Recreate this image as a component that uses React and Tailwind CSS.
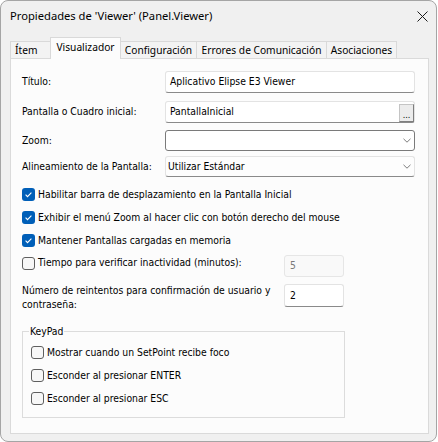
const F = "font-['DejaVu_Sans_Condensed','Liberation_Sans',sans-serif] text-[10.3px] text-black";

function Check({ checked }) {
  return checked ? (
    <span className="w-[13px] h-[13px] rounded-[3px] bg-[#005fb8] flex items-center justify-center shrink-0">
      <svg width="9" height="9" viewBox="0 0 9 9">
        <path d="M1.6 4.7L3.5 6.6L7.4 2.6" fill="none" stroke="white" strokeWidth="1.1" />
      </svg>
    </span>
  ) : (
    <span className="w-[13px] h-[13px] rounded-[3px] border border-[#5f5f5f] bg-[#f7f7f7] shrink-0" />
  );
}

function Chevron() {
  return (
    <svg width="8" height="5" viewBox="0 0 8 5" className="shrink-0">
      <path d="M0.5 0.8L4 4.2L7.5 0.8" fill="none" stroke="#6e6e6e" strokeWidth="0.9" />
    </svg>
  );
}

function CheckRow({ checked, children }) {
  return (
    <div className="h-[23px] flex items-center">
      <Check checked={checked} />
      <span className="ml-[3px] whitespace-nowrap">{children}</span>
    </div>
  );
}

export default function App() {
  return (
    <div className="w-[438px] h-[442px] bg-white">
      <div className="w-[437px] h-[442px] rounded-[8px] border border-[#a5a5a5] bg-[#f0f0f0] flex flex-col overflow-hidden">
        {/* title bar */}
        <div className="h-[30px] shrink-0 flex items-center justify-between pl-[9px] pr-[8px]">
          <span className="font-['Noto_Sans',sans-serif] text-[11.2px] text-black whitespace-nowrap">
            Propiedades de 'Viewer' (Panel.Viewer)
          </span>
          <svg width="11" height="11" viewBox="0 0 11 11">
            <path d="M0.5 0.5L10.5 10.5M10.5 0.5L0.5 10.5" stroke="#1b1b1b" strokeWidth="1" />
          </svg>
        </div>

        {/* tabs */}
        <div className="h-[28px] shrink-0 flex items-end pl-[9px] font-['Noto_Sans',sans-serif] text-[10.2px] text-black">
          <div className="w-[40px] h-[18px] border-t border-l border-[#d9d9d9] bg-[#f3f3f3] flex items-center pl-[4px]">
            Ítem
          </div>
          <div className="relative z-10 w-[71px] h-[22px] border-t border-l border-r border-[#d9d9d9] bg-[#fcfcfc] flex items-center justify-center pb-[1px]">
            Visualizador
          </div>
          <div className="w-[76px] h-[18px] border-t border-r border-[#d9d9d9] bg-[#f3f3f3] flex items-center justify-center">
            Configuración
          </div>
          <div className="w-[130px] h-[18px] border-t border-r border-[#d9d9d9] bg-[#f3f3f3] flex items-center justify-center">
            Errores de Comunicación
          </div>
          <div className="w-[70px] h-[18px] border-t border-r border-[#d9d9d9] bg-[#f3f3f3] flex items-center justify-center">
            Asociaciones
          </div>
        </div>

        {/* panel */}
        <div className={"-mt-px ml-[9px] w-[419px] h-[376px] shrink-0 border border-[#dadada] bg-[#fcfcfc] pl-[11px] pt-[12px] flex flex-col " + F}>
          <div className="h-[22px] flex items-center">
            <span className="w-[143px]">Título:</span>
            <div className="w-[250px] h-[22px] bg-white border border-[#e3e3e3] border-b-[#8a8a8a] rounded-[3px] flex items-center pl-[4px]">
              Aplicativo Elipse E3 Viewer
            </div>
          </div>

          <div className="mt-[8px] h-[22px] flex items-center">
            <span className="w-[143px]">Pantalla o Cuadro inicial:</span>
            <div className="w-[250px] h-[22px] bg-white border border-[#e3e3e3] border-b-[#8a8a8a] rounded-[3px] flex pl-[4px]">
              <span className="flex-1 self-center">PantallaInicial</span>
              <div className="self-end w-[15px] h-[18px] bg-[#ececec] border border-[#c4c4c4] border-r-[#7e7e7e] border-b-[#7e7e7e] flex items-end justify-center leading-[12px] text-[9px]">
                ...
              </div>
            </div>
          </div>

          <div className="mt-[7px] h-[21px] flex items-center">
            <span className="w-[143px]">Zoom:</span>
            <div className="w-[250px] h-[21px] bg-white border border-[#7a7a7a] rounded-[3px] flex items-center justify-end pr-[3px]">
              <Chevron />
            </div>
          </div>

          <div className="mt-[5px] h-[21px] flex items-center">
            <span className="w-[143px]">Alineamiento de la Pantalla:</span>
            <div className="w-[250px] h-[21px] bg-[#fdfdfd] border border-[#e3e3e3] border-b-[#8a8a8a] rounded-[3px] flex items-center pl-[2px] pr-[3px]">
              <span className="flex-1">Utilizar Estándar</span>
              <Chevron />
            </div>
          </div>

          <div className="mt-[6px] flex flex-col">
            <CheckRow checked>Habilitar barra de desplazamiento en la Pantalla Inicial</CheckRow>
            <CheckRow checked>Exhibir el menú Zoom al hacer clic con botón derecho del mouse</CheckRow>
            <CheckRow checked>Mantener Pantallas cargadas en memoria</CheckRow>
          </div>

          <div className="mt-[3px] h-[22px] flex items-start">
            <div className="w-[262px] h-[16px] flex items-center">
              <Check checked={false} />
              <span className="ml-[3px] whitespace-nowrap">Tiempo para verificar inactividad (minutos):</span>
            </div>
            <div className="w-[60px] h-[22px] bg-[#f9f9f9] border border-[#e6e6e6] rounded-[3px] flex items-center pl-[5px] text-[#7a7a7a]">
              5
            </div>
          </div>

          <div className="mt-[7px] h-[23px] flex items-start">
            <div className="w-[262px] -mt-px leading-[14px] whitespace-nowrap">
              Número de reintentos para confirmación de usuario y
              <br />
              contraseña:
            </div>
            <div className="w-[60px] h-[23px] bg-white border border-[#e3e3e3] border-b-[#8a8a8a] rounded-[3px] flex items-center pl-[5px]">
              2
            </div>
          </div>

          <fieldset className="mt-[18px] w-[323px] h-[93px] border border-[#dcdcdc] pl-[8px]">
            <legend className="-ml-[2px] px-[1px] leading-[13px]">KeyPad</legend>
            <div className="mt-[3px] flex flex-col">
              <CheckRow checked={false}>Mostrar cuando un SetPoint recibe foco</CheckRow>
              <CheckRow checked={false}>Esconder al presionar ENTER</CheckRow>
              <CheckRow checked={false}>Esconder al presionar ESC</CheckRow>
            </div>
          </fieldset>
        </div>
      </div>
    </div>
  );
}
